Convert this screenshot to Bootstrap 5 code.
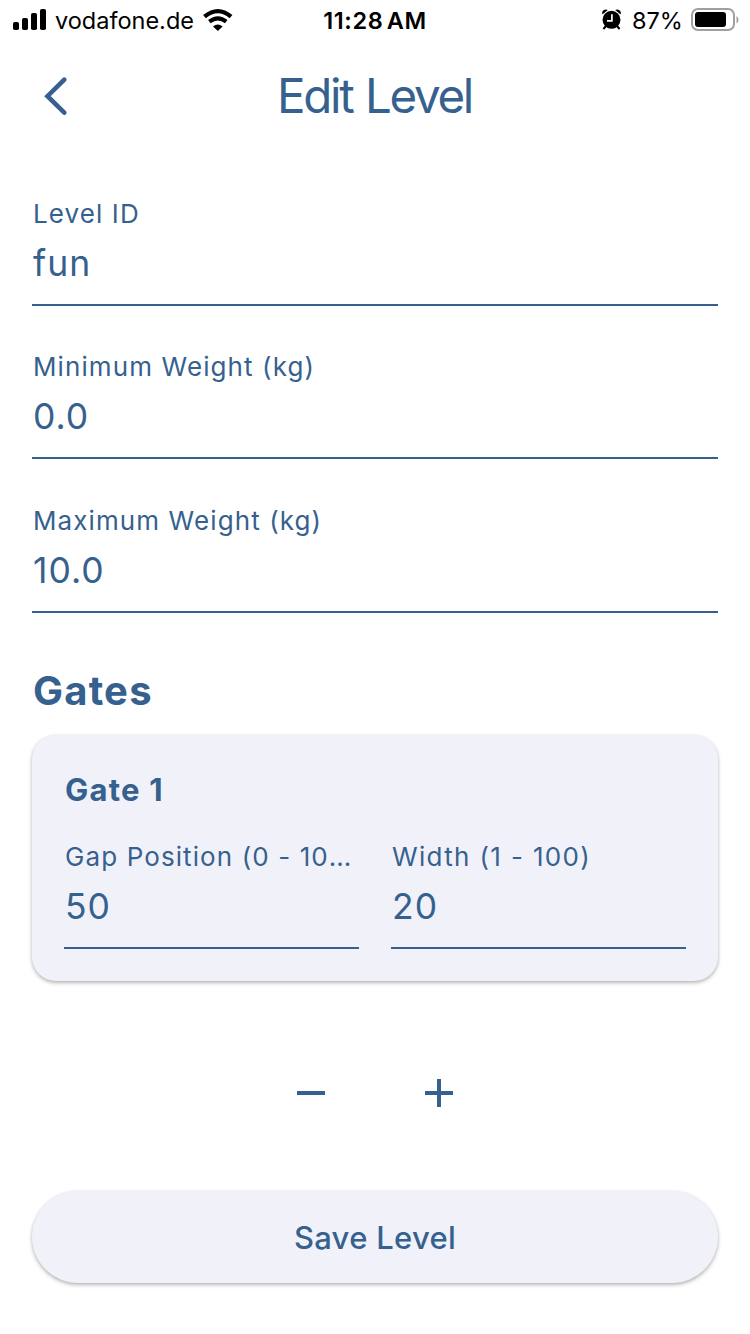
<!DOCTYPE html>
<html lang="en">
<head>
<meta charset="utf-8">
<meta name="viewport" content="width=device-width, initial-scale=1">
<title>Edit Level</title>
<link href="https://cdn.jsdelivr.net/npm/bootstrap@5.3.0/dist/css/bootstrap.min.css" rel="stylesheet">
<style>
  :root { --ink: #36618e; --surface: #f1f1fa; }
  body { font-family: Inter, "Liberation Sans", sans-serif; font-weight: 400; color: var(--ink); background: #fff; min-height: 1334px; overflow: hidden; }
  .status { height: 40px; color: #000; font-size: 24px; line-height: 40px; }
  .status svg { display: block; flex: none; }
  .status span { padding-top: 2px; }
  .status .status-time { font-weight: 600; font-size: 23.5px; letter-spacing: .6px; word-spacing: -3px; padding-top: 1px; }
  .carrier { font-size: 23.5px; letter-spacing: 0; margin-left: 8px; margin-right: 9px; }
  .status-right { margin-right: 10px; }
  .pct { font-size: 23.5px; margin-left: 10px; width: 58px; letter-spacing: -.1px; }
  .topbar { height: 112px; }
  .topbar h1 { font-size: 47.5px; line-height: 56px; font-weight: 400; letter-spacing: -2.3px; word-spacing: 1.5px; padding-right: 1px; }
  .back { left: 32px; top: 32px; color: var(--ink); }
  .field { border-bottom: 2px solid var(--ink); height: 109.5px; padding: 1.6px 0 0 1px; }
  .field-label { font-size: 26px; line-height: 32px; letter-spacing: 1.1px; }
  .field-label.spaced { letter-spacing: 1.35px; }
  .field-label.clipped { padding-right: 4px; }
  .clipped-box { width: 289px; }
  .field-value { font-size: 35.5px; line-height: 48px; letter-spacing: 1px; margin-top: 10.4px; }
  .form-stack { padding: 44px 32px 0; }
  .fields { gap: 44px; }
  .section-title { font-size: 40px; line-height: 48px; font-weight: 700; letter-spacing: 1.2px; margin: 54px 0 20px; padding-left: 1px; }
  .soft { background: var(--surface); box-shadow: 0 2px 4px rgba(0,0,0,.22), 0 1px 3px rgba(0,0,0,.12); }
  .gate { border: 0; border-radius: 24px; height: 246px; padding: 36px 32px 0; color: var(--ink); }
  .gate h3 { font-size: 31px; line-height: 38px; font-weight: 700; letter-spacing: 1.25px; margin: 0 0 32px; padding-left: 1px; }
  .gate-cols { gap: 32px; }
  .gate .field { flex: 1 1 0; min-width: 0; height: 108px; padding-top: 0; }
  .steps { gap: 80px; margin-top: 88px; }
  .steps .btn { width: 48px; height: 48px; color: var(--ink); }
  .save { height: 92px; margin-top: 74px; padding: 4px 0 0; color: var(--ink); font-size: 31px; font-weight: 500; letter-spacing: .3px; }
</style>
</head>
<body>
<div class="status position-relative d-flex align-items-center justify-content-between">
  <div class="d-flex align-items-center">
    <svg width="47" height="40" viewBox="0 0 47 40"><rect x="13" y="22" width="6" height="8" rx="1.8"/><rect x="22" y="18" width="6" height="12" rx="1.8"/><rect x="31" y="13" width="6" height="17" rx="1.8"/><rect x="40" y="9" width="6" height="21" rx="1.8"/></svg>
    <span class="carrier">vodafone.de</span>
    <svg width="30" height="40" viewBox="0 0 30 40" fill="none" stroke="#000"><path d="M1.500 16.600Q15 5.600 28 16.600" stroke-width="4.300"/><path d="M6.300 21.700Q15 15 23.200 21.700" stroke-width="4.100"/><path d="M10 26.500Q14.800 22.600 19.600 26.500L14.800 31Z" fill="#000" stroke="none"/></svg>
  </div>
  <span class="status-time position-absolute top-0 start-50 translate-middle-x text-nowrap">11:28 AM</span>
  <div class="status-right d-flex align-items-center">
    <svg width="22" height="40" viewBox="0 0 22 40"><circle cx="11.500" cy="19.800" r="9"/><path d="M2.300 14.500a3.800 3.800 0 0 1 5.500-4.500zM20.700 14.500a3.800 3.800 0 0 0-5.500-4.500z"/><path d="M6 26l-2.600 3M17 26l2.600 3" stroke="#000" stroke-width="2"/><path d="M11.900 14.300v6.500H7" fill="none" stroke="#fff" stroke-width="1.700"/></svg>
    <span class="pct">87%</span>
    <svg width="50" height="40" viewBox="0 0 50 40"><rect x="2" y="9" width="42" height="21" rx="6" fill="none" stroke="#a0a0a0" stroke-width="2"/><rect x="5" y="12" width="31" height="15" rx="3"/><path d="M46.500 16q2 1 2 3.800t-2 3.800z" fill="#a0a0a0"/></svg>
  </div>
</div>
<header class="topbar position-relative d-flex align-items-center justify-content-center">
  <a class="back position-absolute" href="#" aria-label="Back"><svg class="d-block" width="48" height="48" viewBox="0 0 48 48" fill="none" stroke="currentColor" stroke-width="4.600" stroke-linecap="round" stroke-linejoin="miter"><path d="M32.300 7.600L15.500 24.200L32.300 40.600"/></svg></a>
  <h1 class="m-0">Edit Level</h1>
</header>
<main class="form-stack">
  <div class="fields d-flex flex-column">
    <div class="field"><div class="field-label">Level ID</div><div class="field-value">fun</div></div>
    <div class="field"><div class="field-label">Minimum Weight (kg)</div><div class="field-value">0.0</div></div>
    <div class="field"><div class="field-label">Maximum Weight (kg)</div><div class="field-value">10.0</div></div>
  </div>
  <h2 class="section-title">Gates</h2>
  <section class="card gate soft">
    <h3>Gate 1</h3>
    <div class="gate-cols d-flex">
      <div class="field"><div class="field-label clipped-box text-truncate">Gap Position (0 - 100)</div><div class="field-value">50</div></div>
      <div class="field"><div class="field-label spaced text-truncate">Width (1 - 100)</div><div class="field-value">20</div></div>
    </div>
  </section>
  <div class="steps d-flex justify-content-center">
    <button class="btn border-0 p-0" aria-label="Remove gate"><svg class="d-block" width="48" height="48" fill="currentColor"><rect x="10" y="22" width="28" height="4"/></svg></button>
    <button class="btn border-0 p-0" aria-label="Add gate"><svg class="d-block" width="48" height="48" fill="currentColor"><path d="M10 22h12V10h4v12h12v4H26v12h-4V26H10z"/></svg></button>
  </div>
  <button class="save btn soft w-100 rounded-pill border-0">Save Level</button>
</main>
<script src="https://cdn.jsdelivr.net/npm/bootstrap@5.3.0/dist/js/bootstrap.bundle.min.js"></script>
</body>
</html>
